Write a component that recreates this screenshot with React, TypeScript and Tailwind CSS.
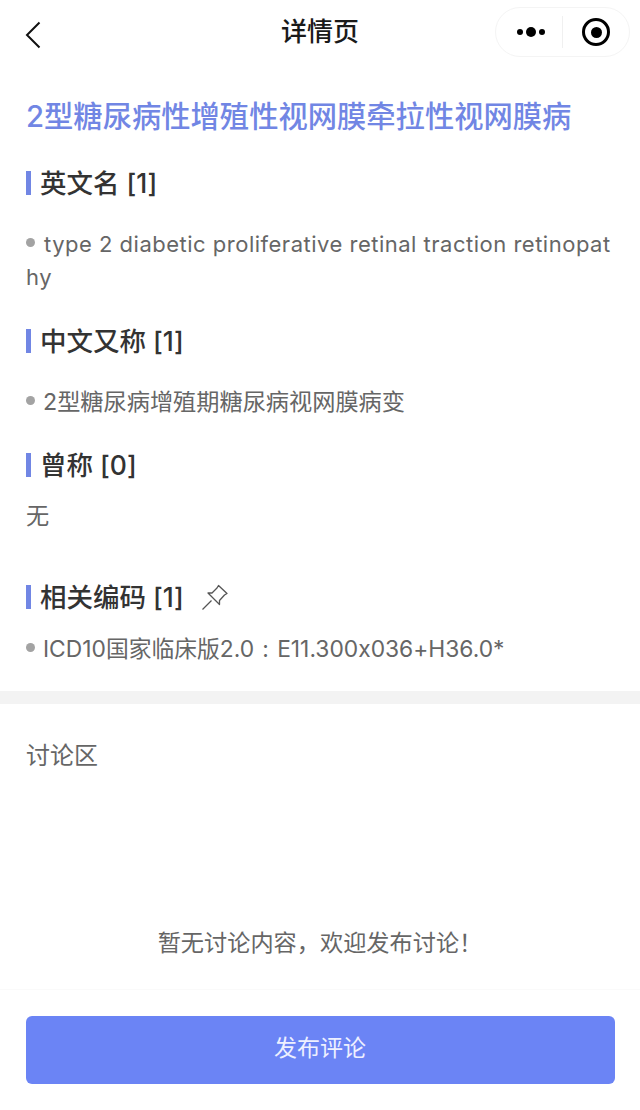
const font = { fontFamily: '"Inter","Noto Sans CJK SC",sans-serif' };

function Heading({ children, after }: { children: React.ReactNode; after?: React.ReactNode }) {
  return (
    <div className="flex items-center h-[32px]">
      <div className="w-[5px] h-[24px] bg-[#7186e4] mr-[9px]" />
      <span className="text-[26.5px] leading-[32px] font-medium text-[#333333]">{children}</span>
      {after}
    </div>
  );
}

function Dot({ tight }: { tight?: boolean }) {
  return <span className={tight ? "inline-block w-[9px] h-[9px] rounded-full bg-[#a3a3a3] mr-[8px] align-[5px]" : "inline-block w-[9px] h-[9px] rounded-full bg-[#a3a3a3] mr-[9px] align-[5px]"} />;
}

export default function App() {
  return (
    <div style={font} className="relative w-[640px] h-[1110px] bg-white overflow-hidden flex flex-col [font-feature-settings:'calt'_0]">
      <header className="relative h-[64px] flex items-center justify-center shrink-0">
        <svg className="absolute left-[24px] top-[21px]" width="18" height="28" viewBox="0 0 18 28" fill="none">
          <path d="M15.5 1.5 3 14l12.5 12.5" stroke="#111" strokeWidth="2" />
        </svg>
        <span className="text-[26px] font-medium text-[#1a1a1a] leading-[32px]">详情页</span>
        <div className="absolute left-[495px] top-[7px] w-[135px] h-[50px] rounded-full border border-[#f4f4f4] flex items-center">
          <div className="w-[66px] flex items-center justify-center gap-[3px] pl-[4px]">
            <span className="w-[6px] h-[6px] rounded-full bg-black" />
            <span className="w-[10px] h-[10px] rounded-full bg-black" />
            <span className="w-[6px] h-[6px] rounded-full bg-black" />
          </div>
          <div className="w-px h-[32px] bg-[#f0f0f0]" />
          <div className="flex-1 flex items-center justify-center">
            <div className="w-[28px] h-[28px] rounded-full border-[3px] border-black flex items-center justify-center">
              <span className="w-[11px] h-[11px] rounded-full bg-black" />
            </div>
          </div>
        </div>
      </header>

      <main className="px-[26px] pt-[32px] flex-1 flex flex-col">
        <h1 className="text-[29.3px] leading-[42px] font-medium text-[#7186e4] whitespace-nowrap">2型糖尿病性增殖性视网膜牵拉性视网膜病</h1>

        <div className="mt-[29px]"><Heading>英文名 [1]</Heading></div>
        <p className="mt-[29px] text-[22px] leading-[33px] text-[#666666] break-all tracking-[0.5px]"><Dot />type 2 diabetic proliferative retinal traction retinopathy</p>

        <div className="mt-[31px]"><Heading>中文又称 [1]</Heading></div>
        <p className="mt-[29px] text-[23.2px] leading-[33px] text-[#666666]"><Dot tight />2型糖尿病增殖期糖尿病视网膜病变</p>

        <div className="mt-[30px]"><Heading>曾称 [0]</Heading></div>
        <p className="mt-[19px] text-[23.2px] leading-[33px] text-[#666666]">无</p>

        <div className="mt-[48px]">
          <Heading
            after={
              <svg className="ml-[17px]" width="28" height="28" viewBox="0 0 28 28" fill="none" stroke="#555" strokeWidth="1.3" strokeLinejoin="round">
                <path d="M1.5 26.5 10.5 17.5" />
                <path d="M17.5 2.5 26 10.5 23.5 12 18.5 17.5 18.5 21.5 7 10 11 10 16 5Z" />
              </svg>
            }
          >
            相关编码 [1]
          </Heading>
        </div>
        <p className="mt-[19px] text-[22.8px] leading-[33px] text-[#666666] whitespace-nowrap"><Dot tight />ICD10国家临床版2.0<span className="inline-block w-[23px] text-center">:</span>E11.300x036+H36.0*</p>
      </main>

      <div className="absolute left-0 top-[691px] w-full h-[13px] bg-[#f3f3f3]" />
      <div className="absolute left-[26px] top-[739px] text-[24px] leading-[34px] text-[#666666]">讨论区</div>
      <div className="absolute left-0 top-[926px] w-full text-center text-[23.2px] leading-[34px] text-[#666666]">暂无讨论内容，欢迎发布讨论！</div>

      <div className="absolute left-0 top-[989px] w-full h-[121px] border-t border-[#fafafa] flex justify-center pt-[26px]">
        <button className="w-[589px] h-[68px] rounded-[6px] bg-[#6b84f5] text-[#eef0ff] text-[23px] pb-[3px] flex items-center justify-center">发布评论</button>
      </div>
    </div>
  );
}
